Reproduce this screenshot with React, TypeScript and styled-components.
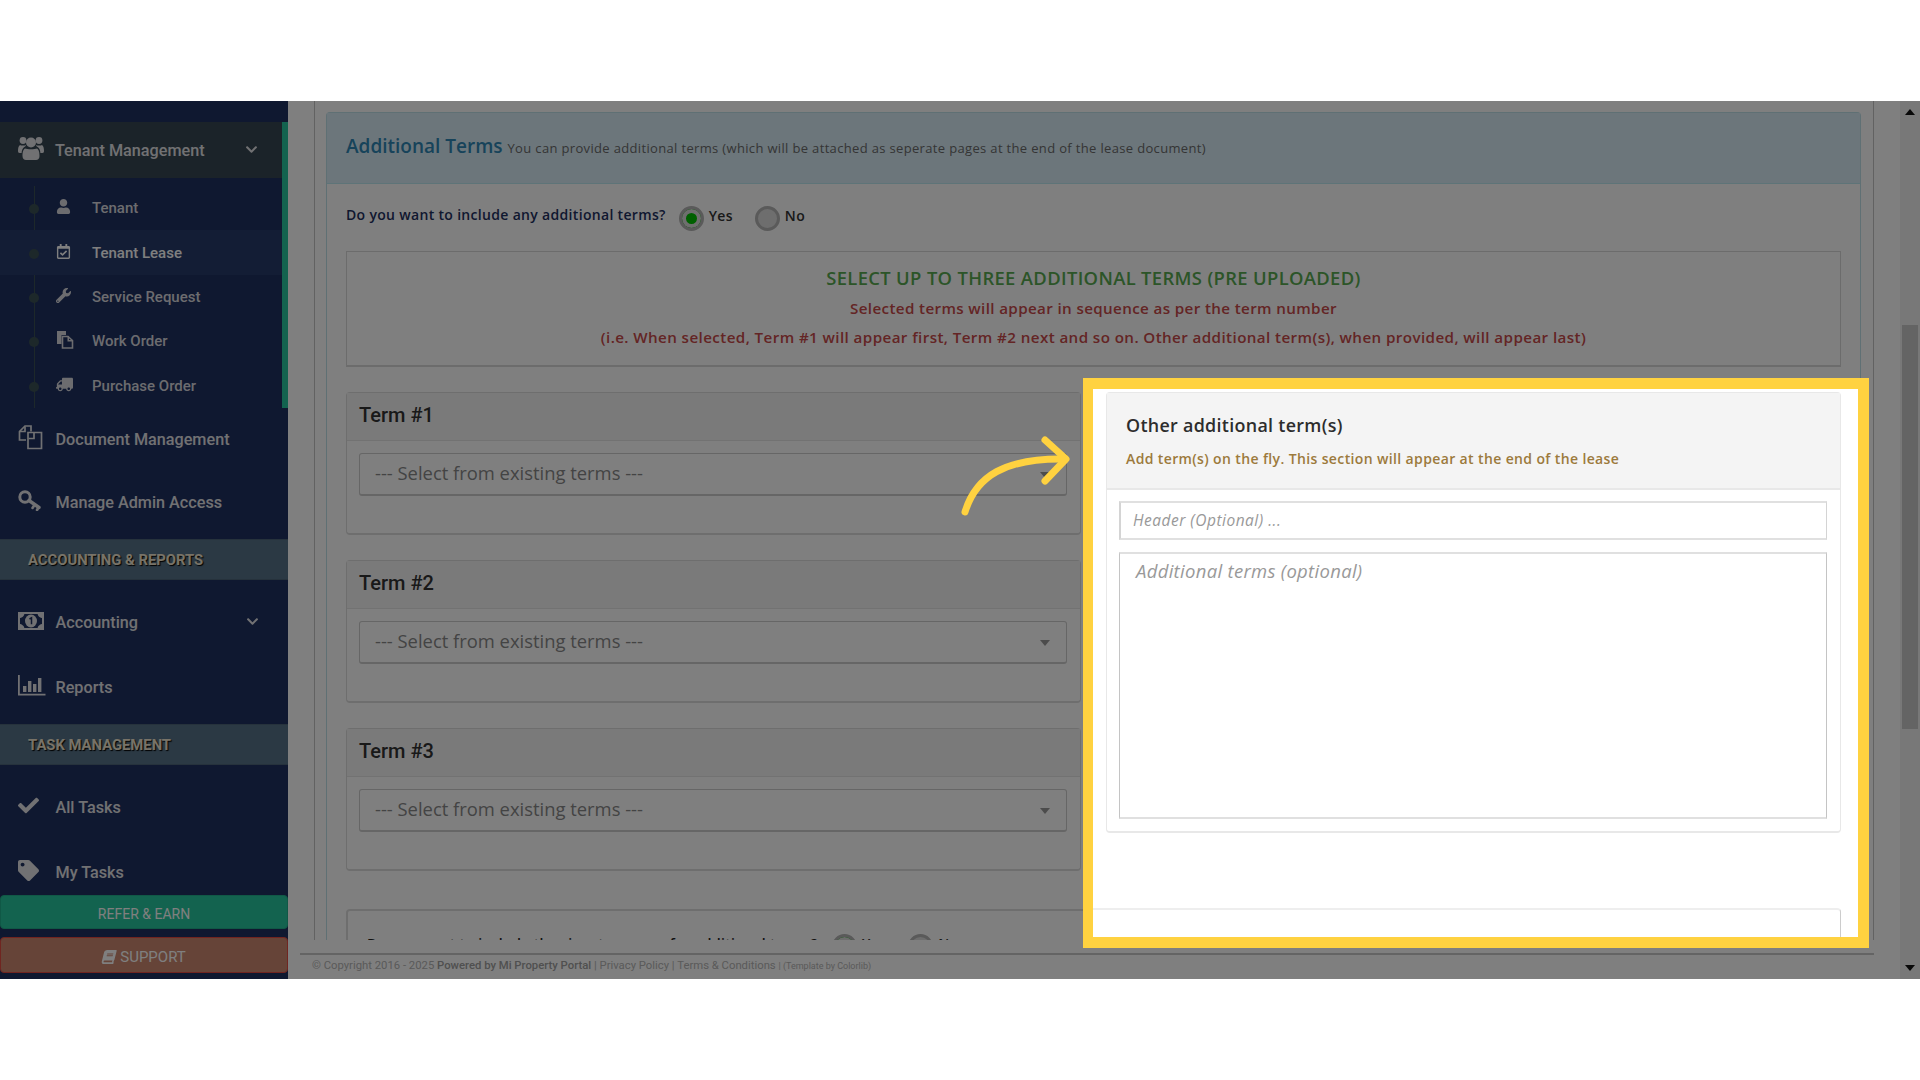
import React from "react";
import styled, { createGlobalStyle } from "styled-components";
import {
  FaUser, FaRegCalendarCheck, FaWrench, FaTruck,
  FaCheck, FaTag, FaChevronDown, FaBook,
} from "react-icons/fa";

const Global = createGlobalStyle`
  html, body { margin: 0; padding: 0; background: #fff; }
  * { box-sizing: border-box; }
  body { font-family: "Open Sans", "Liberation Sans", sans-serif; }
`;

const Stage = styled.div`
  height: 1080px;
  padding: 101px 0;
  background: #fff;
  overflow: hidden;
`;
const AppFrame = styled.div`
  position: relative;
  height: 878px;
  display: flex;
  background: #fff;
`;
const Dim = styled.div`
  position: absolute;
  inset: 0;
  background: rgba(0, 0, 0, 0.5);
  z-index: 5;
`;

/* Sidebar */
const Sidebar = styled.aside`
  position: relative;
  width: 288px;
  flex: none;
  height: 100%;
  background: #1e3060;
  padding-top: 21px;
  overflow: hidden;
  font-family: Roboto, sans-serif;
`;
const MenuRow = styled.div<{ $h?: number; $open?: boolean }>`
  height: ${(p) => p.$h ?? 65}px;
  display: flex;
  align-items: center;
  padding: 0 ${(p) => (p.$open ? 24 : 29)}px 0 18px;
  color: #e2e2e6;
  font-size: 16.2px;
  font-weight: 500;
  background: ${(p) => (p.$open ? "#364652" : "transparent")};
`;
const MenuIcon = styled.span<{ $w?: number }>`
  width: ${(p) => p.$w ?? 37}px;
  flex: none;
  display: flex;
  align-items: center;
  font-size: 21px;
  margin-top: -4px;
  svg { display: block; }
`;
const MenuLabel = styled.span`
  flex: 1;
`;
const Chevron = styled(FaChevronDown)`
  font-size: 13px;
  margin-top: -2px;
`;
const OpenGroup = styled.div`
  border-right: 6px solid #26c69e;
  height: 286px;
`;
const SubList = styled.div`
  position: relative;
  padding-top: 8px;
  &::before {
    content: "";
    position: absolute;
    left: 34px;
    top: 8px;
    bottom: 0;
    width: 1px;
    background: #3b5054;
  }
`;
const SubRow = styled.div<{ $active?: boolean }>`
  position: relative;
  height: 44.4px;
  display: flex;
  align-items: center;
  padding-left: 56px;
  color: ${(p) => (p.$active ? "#fff" : "#d8d8de")};
  background: ${(p) => (p.$active ? "#263a6a" : "transparent")};
  font-size: 15px;
  font-weight: 500;
  &::before {
    content: "";
    position: absolute;
    left: 29px;
    top: 50%;
    width: 10px;
    height: 10px;
    margin-top: -4px;
    border-radius: 50%;
    background: #3b5054;
  }
`;
const SubIcon = styled.span`
  width: 36px;
  flex: none;
  display: flex;
  font-size: 15px;
  margin-top: -3px;
`;
const FlippedTruck = styled(FaTruck)`
  transform: scaleX(-1);
  font-size: 17px;
`;
const SectionBar = styled.div<{ $top: number; $bottom: number }>`
  height: 41px;
  margin: ${(p) => p.$top}px 0 ${(p) => p.$bottom}px;
  display: flex;
  align-items: center;
  padding-left: 28px;
  background: #567288;
  color: #f0e6d0;
  font-size: 14.8px;
  font-weight: 700;
  text-shadow: 1px 1px 1px #000;
  border-top: 1px solid #4d6578;
  border-bottom: 1px solid #4d6578;
`;
const SideButtons = styled.div`
  position: absolute;
  left: 0;
  right: 0;
  bottom: 6px;
  display: flex;
  flex-direction: column;
  gap: 8px;
`;
const SideButton = styled.div<{ $bg: string; $border: string; $h: number; $fs: number }>`
  height: ${(p) => p.$h}px;
  display: flex;
  align-items: center;
  justify-content: center;
  gap: 4px;
  padding-top: 3px;
  background: ${(p) => p.$bg};
  border: 1px solid ${(p) => p.$border};
  border-radius: 4px;
  color: #fff;
  font-size: ${(p) => p.$fs}px;
`;
const SlantBook = styled(FaBook)`
  font-size: 14px;
  transform: skewX(-14deg);
`;

/* Main */
const Main = styled.main`
  flex: 1;
  min-width: 0;
  display: flex;
  position: relative;
`;
const MainColumn = styled.div`
  flex: 1;
  min-width: 0;
  display: flex;
  flex-direction: column;
`;
const ScrollArea = styled.div`
  height: 839px;
  margin: 0 26px 0 26px;
  border-left: 1px solid #c4c4c4;
  border-right: 1px solid #c4c4c4;
  padding: 11px 12px 0 11px;
  overflow: hidden;
`;
const InfoCard = styled.section`
  border: 1px solid #bfe0e8;
  border-bottom: none;
  border-radius: 4px 4px 0 0;
  height: 900px;
`;
const InfoHeader = styled.header`
  height: 71px;
  background: #d9edf7;
  border-bottom: 1px solid #bce8f1;
  padding: 20px 19px 0;
  display: flex;
  align-items: baseline;
  gap: 5px;
`;
const InfoTitle = styled.h2`
  margin: 0;
  font-size: 19px;
  font-weight: 600;
  color: #2f86b4;
`;
const InfoHint = styled.span`
  font-size: 13px;
  letter-spacing: 0.34px;
  color: #6a6a6a;
`;
const InfoBody = styled.div`
  padding: 22px 20px 0 19px;
`;
const QuestionRow = styled.div`
  height: 24px;
  display: flex;
  align-items: center;
  font-size: 14px;
  font-weight: 600;
  letter-spacing: 0.32px;
  color: #1e3060;
`;
const QuestionText = styled.span`
  margin-bottom: 8px;
`;
const Radio = styled.span<{ $on?: boolean; $ml: number }>`
  width: 25px;
  height: 25px;
  margin-left: ${(p) => p.$ml}px;
  border-radius: 50%;
  flex: none;
  border: 3px solid #b4b4b4;
  background: ${(p) => (p.$on ? "#00c000" : "#dcdcdc")};
  box-shadow: inset 0 0 0 4px #dcdcdc;
`;
const RadioLabel = styled.span`
  margin: 0 0 5px 5px;
  color: #333;
  font-size: 14px;
`;
const NoticeBox = styled.div`
  margin-top: 21px;
  height: 116px;
  width: 1495px;
  border: 2px solid #d8d8d8;
  border-width: 1px 1px 2px 1px;
  text-align: center;
  font-weight: 600;
`;
const NoticeTitle = styled.div`
  margin: 12px 0 2px;
  font-size: 18.4px;
  line-height: 28px;
  letter-spacing: 0.34px;
  color: #58aa50;
`;
const NoticeLine = styled.div`
  font-size: 15.2px;
  line-height: 29px;
  letter-spacing: 0.4px;
  color: #c84a4a;
`;
const NoticeSub = styled(NoticeLine)`
  letter-spacing: 0.36px;
`;
const TermColumn = styled.div`
  width: 735px;
  margin-top: 25px;
  display: flex;
  flex-direction: column;
  gap: 25px;
`;
const TermCard = styled.div`
  height: 143px;
  border: 1px solid #dcdcdc;
  border-bottom-width: 2px;
  border-radius: 4px;
`;
const TermHeader = styled.div`
  height: 48px;
  background: #f5f5f5;
  border-bottom: 1px solid #e4e4e4;
  padding: 0 0 3px 12px;
  display: flex;
  align-items: center;
  font-family: Roboto, sans-serif;
  font-weight: 500;
  font-size: 20px;
  color: #333;
`;
const SelectBox = styled.div`
  position: relative;
  height: 43px;
  margin: 12px 13px 0 12px;
  display: flex;
  align-items: center;
  padding: 0 0 3px 15px;
  border: 1px solid #ccc;
  border-bottom-width: 2px;
  border-radius: 3px;
  font-size: 18.4px;
  color: #888;
  &::after {
    content: "";
    position: absolute;
    right: 16px;
    top: 18px;
    border-left: 5px solid transparent;
    border-right: 5px solid transparent;
    border-top: 6px solid #999;
  }
`;
const SignatureCard = styled.div`
  margin-top: 38px;
  width: 1495px;
  height: 90px;
  border: 2px solid #dcdcdc;
  border-bottom: none;
  border-radius: 4px 4px 0 0;
  padding: 23px 0 0 19px;
  display: flex;
  align-items: flex-start;
  font-size: 14px;
  font-weight: 600;
  letter-spacing: 0.32px;
  color: #222;
`;
const Footer = styled.footer`
  margin: 13px 26px 0 12px;
  height: 26px;
  border-top: 2px solid #c8c8c8;
  padding: 0 0 3px 12px;
  display: flex;
  align-items: center;
  font-family: Roboto, sans-serif;
  font-size: 11.3px;
  color: #b4b4b4;
`;
const FooterStrong = styled.span`
  color: #a0a0a0;
  font-weight: 500;
  white-space: pre;
`;
const FooterPlain = styled.span`
  white-space: pre;
`;
const FooterSmall = styled.span`
  font-size: 9px;
  white-space: pre;
  margin-top: 1px;
`;
const ScrollTrack = styled.div`
  width: 20px;
  flex: none;
  display: flex;
  flex-direction: column;
  align-items: center;
  background: #f1f1f1;
  padding-top: 224px;
  position: relative;
`;
const ScrollThumb = styled.div`
  width: 16px;
  height: 404px;
  background: #c8c8c8;
`;
const ScrollArrow = styled.span<{ $up?: boolean }>`
  position: absolute;
  left: 5px;
  ${(p) => (p.$up ? "top: 8px;" : "bottom: 8px;")}
  border-left: 5px solid transparent;
  border-right: 5px solid transparent;
  ${(p) => (p.$up ? "border-bottom: 6px solid #111;" : "border-top: 6px solid #111;")}
`;

/* Spotlight */
const Spotlight = styled.div`
  position: absolute;
  z-index: 6;
  left: 1083px;
  top: 277px;
  width: 786px;
  height: 570px;
  background: #fff;
  border: 11px solid #ffd240;
  border-left-width: 10px;
  padding-top: 3px;
  overflow: hidden;
`;
const OtherPanel = styled.div`
  margin: 0 17px 0 13px;
  height: 441px;
  border: 1px solid #e8e8e8;
  border-bottom-width: 2px;
  border-radius: 4px;
`;
const OtherHeader = styled.div`
  height: 97px;
  background: #f4f4f4;
  border-bottom: 2px solid #e8e8e8;
  padding: 17px 0 0 19px;
`;
const OtherTitle = styled.h3`
  margin: 0;
  font-size: 17.9px;
  line-height: 30px;
  font-weight: 600;
  letter-spacing: 0.3px;
  color: #2d2d2d;
`;
const OtherHint = styled.div`
  margin-top: 9px;
  font-size: 14px;
  line-height: 20px;
  font-weight: 600;
  letter-spacing: 0.37px;
  color: #9c7a3c;
`;
const OtherBody = styled.div`
  padding: 11px 13px 0 12px;
`;
const HeaderField = styled.div`
  height: 39px;
  border-style: solid;
  border-width: 2px 1px 2px 2px;
  border-color: #e0e0e0 #d4d4d4 #e0e0e0 #d4d4d4;
  padding: 0 0 1px 12px;
  display: flex;
  align-items: center;
  font-style: italic;
  font-size: 15.5px;
  letter-spacing: 0.5px;
  color: #999;
`;
const BodyField = styled.div`
  margin-top: 12px;
  height: 267px;
  border-style: solid;
  border-width: 2px 1px 2px 1px;
  border-color: #e0e0e0 #c4c4c4 #e0e0e0 #c4c4c4;
  padding: 3px 0 0 16px;
  font-style: italic;
  font-size: 18.5px;
  line-height: 28px;
  letter-spacing: 0.3px;
  color: #999;
`;
const TailCard = styled.div`
  margin: 75px 17px 0 0;
  height: 40px;
  border-top: 2px solid #eee;
  border-right: 1px solid #ccc;
  border-top-right-radius: 4px;
`;
const ArrowSvg = styled.svg`
  position: absolute;
  z-index: 6;
  left: 955px;
  top: 330px;
`;

const UsersIcon = () => (
  <svg width="26" height="24" viewBox="0 0 26 24" fill="currentColor">
    <circle cx="13" cy="6.5" r="5" />
    <circle cx="5" cy="4.5" r="3.4" />
    <circle cx="21" cy="4.5" r="3.4" />
    <path d="M7 12.5C9 13.5 17 13.5 19 12.5C21 13.5 21.5 17 21.5 20C21.5 22.5 20 24 18 24H8C6 24 4.5 22.5 4.5 20C4.5 17 5 13.5 7 12.5Z" />
    <path d="M2 9C3 9.8 7 9.8 8 9C8 10 7.2 10.6 6 11.3C4.6 12.2 3.8 14.2 3.6 17H1.5C.5 17 0 16.2 0 15C0 12.5.5 9.8 2 9Z" />
    <path d="M24 9C23 9.8 19 9.8 18 9C18 10 18.8 10.6 20 11.3C21.4 12.2 22.2 14.2 22.4 17H24.5C25.5 17 26 16.2 26 15C26 12.5 25.5 9.8 24 9Z" />
  </svg>
);
const FilesIcon = () => (
  <svg width="18" height="18" viewBox="0 0 18 18">
    <path fill="currentColor" d="M1 0h9v4H5.5v9H1z" />
    <path fill="none" stroke="currentColor" strokeWidth="1.6" d="M6.5 5.5H12l4.5 4v7.5H6.5z" />
    <path fill="currentColor" d="M11.5 5h1.5v4h4v1.5h-5.500z" />
  </svg>
);
const DocsIcon = () => (
  <svg width="25" height="25" viewBox="0 0 25 25" fill="none" stroke="currentColor" strokeWidth="1.7">
    <path d="M8 15H1.5V6.500L7 1h6v5.500" />
    <path d="M7 1.500v5H1.500" />
    <path d="M10 7.500h13.500v16H10V13.500z" />
    <path d="M16 8v5.500h-5.500" />
  </svg>
);
const KeyIcon = () => (
  <svg width="23" height="21" viewBox="0 0 23 21" fill="none" stroke="currentColor" strokeLinecap="round">
    <circle cx="7" cy="7" r="5.200" strokeWidth="3" />
    <path d="M11 10.500L21 17.500" strokeWidth="3.400" />
    <path d="M16.500 15L14.500 18M20.500 17.500L19 20" strokeWidth="2.600" />
  </svg>
);
const MoneyIcon = () => (
  <svg width="26" height="18" viewBox="0 0 26 18">
    <rect x="1" y="1" width="24" height="16" fill="none" stroke="currentColor" strokeWidth="2" />
    <path fill="currentColor" d="M1 1h5.500C6.500 4 4 6 1 6zM25 1h-5.500c0 3 2.500 5 5.500 5zM1 17h5.500c0-3-2.500-5-5.500-5zM25 17h-5.500c0-3 2.500-5 5.500-5z" />
    <ellipse cx="13" cy="9" rx="6" ry="6.500" fill="currentColor" />
    <path d="M11.500 7l2-1.200v6.400" fill="none" stroke="#1e3060" strokeWidth="1.500" />
  </svg>
);
const BarsIcon = () => (
  <svg width="28" height="21" viewBox="0 0 28 21" fill="currentColor">
    <path d="M0 0h1.800v18.800H27.500v1.800H0z" />
    <rect x="5" y="11" width="3.400" height="6" />
    <rect x="10" y="6" width="3.400" height="11" />
    <rect x="15" y="9" width="3.400" height="8" />
    <rect x="20" y="3" width="3.400" height="14" />
  </svg>
);

const subItems = [
  { label: "Tenant", icon: <FaUser /> },
  { label: "Tenant Lease", icon: <FaRegCalendarCheck />, active: true },
  { label: "Service Request", icon: <FaWrench /> },
  { label: "Work Order", icon: <FilesIcon /> },
  { label: "Purchase Order", icon: <FlippedTruck /> },
];

export default function App() {
  return (
    <Stage>
      <Global />
      <AppFrame>
        <Sidebar>
          <OpenGroup>
            <MenuRow $h={56} $open>
              <MenuIcon><UsersIcon /></MenuIcon>
              <MenuLabel>Tenant Management</MenuLabel>
              <Chevron />
            </MenuRow>
            <SubList>
              {subItems.map((s) => (
                <SubRow key={s.label} $active={s.active}>
                  <SubIcon>{s.icon}</SubIcon>
                  {s.label}
                </SubRow>
              ))}
            </SubList>
          </OpenGroup>
          <MenuRow $h={62}>
            <MenuIcon $w={37.5}><DocsIcon /></MenuIcon>
            <MenuLabel>Document Management</MenuLabel>
          </MenuRow>
          <MenuRow>
            <MenuIcon $w={37.5}><KeyIcon /></MenuIcon>
            <MenuLabel>Manage Admin Access</MenuLabel>
          </MenuRow>
          <SectionBar $top={4} $bottom={10}>ACCOUNTING &amp; REPORTS</SectionBar>
          <MenuRow>
            <MenuIcon $w={37.5}><MoneyIcon /></MenuIcon>
            <MenuLabel>Accounting</MenuLabel>
            <Chevron />
          </MenuRow>
          <MenuRow>
            <MenuIcon $w={37.5}><BarsIcon /></MenuIcon>
            <MenuLabel>Reports</MenuLabel>
          </MenuRow>
          <SectionBar $top={4} $bottom={10}>TASK MANAGEMENT</SectionBar>
          <MenuRow>
            <MenuIcon $w={37.5}><FaCheck /></MenuIcon>
            <MenuLabel>All Tasks</MenuLabel>
          </MenuRow>
          <MenuRow>
            <MenuIcon $w={37.5}><FaTag /></MenuIcon>
            <MenuLabel>My Tasks</MenuLabel>
          </MenuRow>
          <SideButtons>
            <SideButton $bg="#26c69e" $border="#20b08c" $h={34} $fs={14}>REFER &amp; EARN</SideButton>
            <SideButton $bg="#cc8870" $border="#e04a40" $h={36} $fs={15}><SlantBook />SUPPORT</SideButton>
          </SideButtons>
        </Sidebar>
        <Main>
          <MainColumn>
            <ScrollArea>
              <InfoCard>
                <InfoHeader>
                  <InfoTitle>Additional Terms</InfoTitle>
                  <InfoHint>You can provide additional terms (which will be attached as seperate pages at the end of the lease document)</InfoHint>
                </InfoHeader>
                <InfoBody>
                  <QuestionRow>
                    <QuestionText>Do you want to include any additional terms?</QuestionText>
                    <Radio $on $ml={13} />
                    <RadioLabel>Yes</RadioLabel>
                    <Radio $ml={22} />
                    <RadioLabel>No</RadioLabel>
                  </QuestionRow>
                  <NoticeBox>
                    <NoticeTitle>SELECT UP TO THREE ADDITIONAL TERMS (PRE UPLOADED)</NoticeTitle>
                    <NoticeSub>Selected terms will appear in sequence as per the term number</NoticeSub>
                    <NoticeLine>(i.e. When selected, Term #1 will appear first, Term #2 next and so on. Other additional term(s), when provided, will appear last)</NoticeLine>
                  </NoticeBox>
                  <TermColumn>
                    {[1, 2, 3].map((n) => (
                      <TermCard key={n}>
                        <TermHeader>Term #{n}</TermHeader>
                        <SelectBox>--- Select from existing terms ---</SelectBox>
                      </TermCard>
                    ))}
                  </TermColumn>
                  <SignatureCard>
                    Do you want to include the signature page for additional terms?
                    <Radio $on $ml={14} />
                    <RadioLabel>Yes</RadioLabel>
                    <Radio $ml={22} />
                    <RadioLabel>No</RadioLabel>
                  </SignatureCard>
                </InfoBody>
              </InfoCard>
            </ScrollArea>
            <Footer>
              <FooterPlain>© Copyright 2016 - 2025 </FooterPlain>
              <FooterStrong>Powered by Mi Property Portal</FooterStrong>
              <FooterPlain> | Privacy Policy | Terms &amp; Conditions </FooterPlain>
              <FooterSmall>| (Template by Colorlib)</FooterSmall>
            </Footer>
          </MainColumn>
          <ScrollTrack>
            <ScrollArrow $up />
            <ScrollThumb />
            <ScrollArrow />
          </ScrollTrack>
        </Main>
        <Dim />
        <ArrowSvg width="125" height="90" viewBox="0 0 125 90" fill="none" stroke="#ffd240" strokeWidth="7" strokeLinecap="round" strokeLinejoin="round">
          <path d="M10 81C21 45 50 27 110 28" />
          <path d="M90 9L111 28L90 50" />
        </ArrowSvg>
        <Spotlight>
          <OtherPanel>
            <OtherHeader>
              <OtherTitle>Other additional term(s)</OtherTitle>
              <OtherHint>Add term(s) on the fly. This section will appear at the end of the lease</OtherHint>
            </OtherHeader>
            <OtherBody>
              <HeaderField>Header (Optional) ...</HeaderField>
              <BodyField>Additional terms (optional)</BodyField>
            </OtherBody>
          </OtherPanel>
          <TailCard />
        </Spotlight>
      </AppFrame>
    </Stage>
  );
}
